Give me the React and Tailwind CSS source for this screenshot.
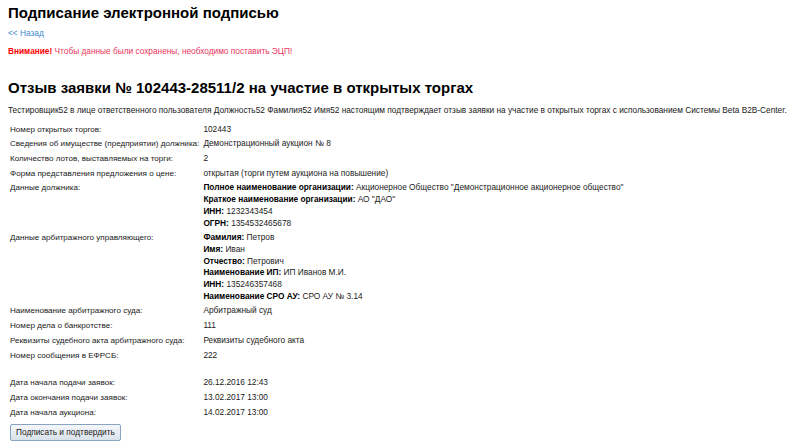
const rows = [
  { label: 'Номер открытых торгов:', value: '102443' },
  { label: 'Сведения об имуществе (предприятии) должника:', value: 'Демонстрационный аукцион № 8' },
  { label: 'Количество лотов, выставляемых на торги:', value: '2' },
  { label: 'Форма представления предложения о цене:', value: 'открытая (торги путем аукциона на повышение)' },
  {
    label: 'Данные должника:',
    fields: [
      ['Полное наименование организации:', 'Акционерное Общество "Демонстрационное акционерное общество"'],
      ['Краткое наименование организации:', 'АО "ДАО"'],
      ['ИНН:', '1232343454'],
      ['ОГРН:', '1354532465678'],
    ],
  },
  {
    label: 'Данные арбитражного управляющего:',
    fields: [
      ['Фамилия:', 'Петров'],
      ['Имя:', 'Иван'],
      ['Отчество:', 'Петрович'],
      ['Наименование ИП:', 'ИП Иванов М.И.'],
      ['ИНН:', '135246357468'],
      ['Наименование СРО АУ:', 'СРО АУ № 3.14'],
    ],
  },
  { label: 'Наименование арбитражного суда:', value: 'Арбитражный суд' },
  { label: 'Номер дела о банкротстве:', value: '111' },
  { label: 'Реквизиты судебного акта арбитражного суда:', value: 'Реквизиты судебного акта' },
  { label: 'Номер сообщения в ЕФРСБ:', value: '222' },
  { spacer: true },
  { label: 'Дата начала подачи заявок:', value: '26.12.2016 12:43' },
  { label: 'Дата окончания подачи заявок:', value: '13.02.2017 13:00' },
  { label: 'Дата начала аукциона:', value: '14.02.2017 13:00' },
];

const App = () => {
  return (
    <div className="min-h-screen whitespace-nowrap bg-white px-[8px] pt-[4px] text-[8.3px] leading-[11.7px] text-[#1a1a1a]" style={{ fontFamily: '"Liberation Sans", Arial, sans-serif' }}>
      <h1 className="text-[15px] font-bold leading-[18px] text-black">Подписание электронной подписью</h1>

      <a href="#" className="mt-[6px] block text-[#3d8bcd]">&lt;&lt; Назад</a>

      <p className="mt-[6px] text-[#e8365d]">
        <b className="text-[#ff0000]">Внимание!</b> Чтобы данные были сохранены, необходимо поставить ЭЦП!
      </p>

      <h2 className="mt-[22px] text-[15px] font-bold leading-[18px] text-black">Отзыв заявки № 102443-28511/2 на участие в открытых торгах</h2>

      <p className="mt-[8px]">
        Тестировщик52 в лице ответственного пользователя Должность52 Фамилия52 Имя52 настоящим подтверждает отзыв заявки на участие в открытых торгах с использованием Системы Beta B2B-Center.
      </p>

      <table className="mt-[5px] border-collapse">
        <tbody>
          {rows.map((r, i) =>
            r.spacer ? (
              <tr key={i}>
                <td colSpan={2} className="h-[13px]"></td>
              </tr>
            ) : (
              <tr key={i} className="align-top">
                <td className="w-[192px] px-[2px] py-[1.5px] text-[8.1px]">{r.label}</td>
                <td className="px-[2px] py-[1.5px]">
                  {r.fields
                    ? r.fields.map(([k, v]) => (
                        <div key={k}>
                          <b className="text-black">{k}</b> {v}
                        </div>
                      ))
                    : r.value}
                </td>
              </tr>
            )
          )}
        </tbody>
      </table>

      <button className="mt-[4px] ml-[2px] rounded-[2px] border border-[#8aa4c0] bg-gradient-to-b from-[#f4f7fa] to-[#d9e2ea] px-[5px] py-[2px] text-[8.3px] leading-[11px] text-[#1a1a1a]">
        Подписать и подтвердить
      </button>
    </div>
  );
};

export default App;
